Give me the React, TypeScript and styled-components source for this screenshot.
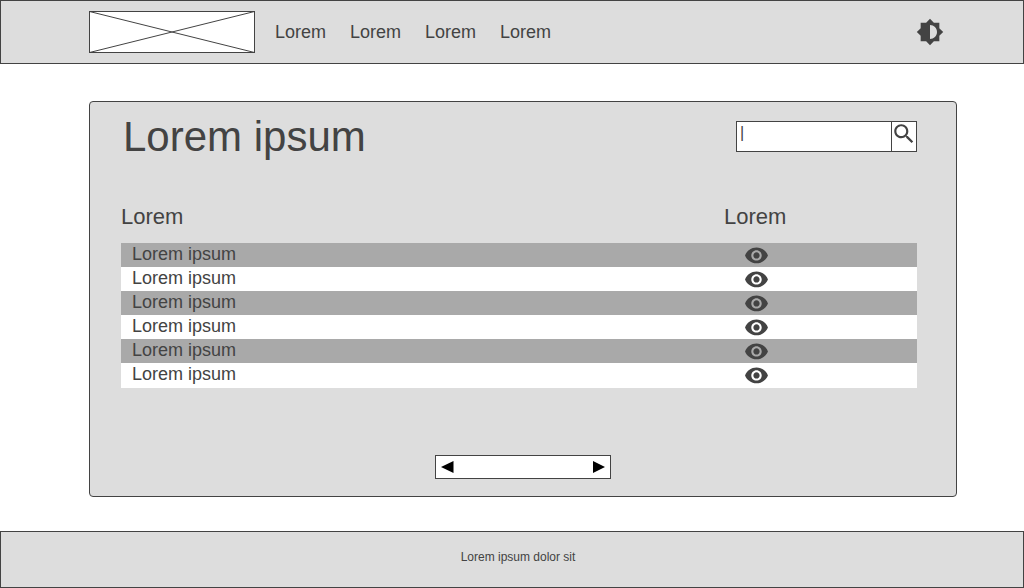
import React from "react";
import styled, { createGlobalStyle } from "styled-components";

const INK = "#434343";
const SURFACE = "#dddddd";
const STRIPE = "#a9a9a9";

const GlobalStyle = createGlobalStyle`
  *, *::before, *::after { box-sizing: border-box; }
  body {
    margin: 0;
    background: #ffffff;
    color: ${INK};
    font-family: "Liberation Sans", Arial, sans-serif;
  }
`;

const Page = styled.div`
  display: flex;
  flex-direction: column;
  min-height: 100vh;
`;

const Header = styled.header`
  display: flex;
  align-items: center;
  min-height: 64px;
  padding: 0 79px 0 88px;
  border: 1px solid ${INK};
  background: ${SURFACE};
`;

const LogoLink = styled.a`
  display: flex;
  color: ${INK};
`;

const Nav = styled.nav`
  display: flex;
  gap: 24px;
  margin-left: 20px;
`;

const NavLink = styled.a`
  color: ${INK};
  font-size: 18px;
  line-height: 24px;
  text-decoration: none;
`;

const IconButton = styled.button`
  display: flex;
  align-items: center;
  justify-content: center;
  padding: 0;
  border: 0;
  background: none;
  color: ${INK};
  cursor: pointer;

  svg { flex-shrink: 0; }
`;

const ThemeButton = styled(IconButton)`
  margin-left: auto;
`;

const Main = styled.main`
  display: flex;
  flex: 1;
  flex-direction: column;
  padding: 37px 67px 34px 89px;
`;

const Card = styled.section`
  display: flex;
  flex: 1;
  flex-direction: column;
  padding: 11px 39px 17px 31px;
  border: 1px solid ${INK};
  border-radius: 4px;
  background: ${SURFACE};
`;

const CardHeader = styled.div`
  display: flex;
  align-items: center;
  justify-content: space-between;
  padding-left: 2px;
`;

const Title = styled.h1`
  margin: 0;
  font-size: 42px;
  font-weight: 400;
  line-height: 47px;
`;

const SearchForm = styled.form`
  display: flex;
  width: 181px;
  height: 31px;
  border: 1px solid ${INK};
  background: #ffffff;
`;

const SearchInput = styled.input`
  flex: 1;
  min-width: 0;
  padding: 0 3px 8px;
  border: 0;
  outline: 0;
  background: none;
  color: ${INK};
  font-family: inherit;
  font-size: 16px;
`;

const SearchButton = styled(IconButton)`
  align-items: flex-start;
  width: 25px;
  border-left: 1px solid ${INK};
`;

const Table = styled.table`
  width: 100%;
  margin-top: 42px;
  border-collapse: collapse;
  table-layout: fixed;
`;

const HeadCell = styled.th<{ $width?: string }>`
  width: ${({ $width }) => $width ?? "auto"};
  height: 41px;
  padding: 0 0 12px;
  font-size: 22px;
  font-weight: 400;
  line-height: 28px;
  text-align: left;
`;

const Row = styled.tr`
  height: 24px;
  background: #ffffff;

  &:nth-child(odd) { background: ${STRIPE}; }
  &:last-child { border-bottom: 1px solid #ffffff; }
`;

const NameCell = styled.td`
  padding: 0 11px 2px;
  font-size: 18px;
  line-height: 22px;
`;

const ActionCell = styled.td`
  padding: 0 20px;
`;

const Pager = styled.nav`
  display: flex;
  align-items: center;
  align-self: center;
  justify-content: space-between;
  width: 176px;
  height: 24px;
  margin-top: auto;
  margin-left: 8px;
  padding: 0 5px;
  border: 1px solid ${INK};
  background: #ffffff;
`;

const PagerButton = styled(IconButton)`
  color: #000000;
`;

const Footer = styled.footer`
  display: flex;
  justify-content: center;
  min-height: 57px;
  padding: 17px 0 0 12px;
  border: 1px solid ${INK};
  background: ${SURFACE};
  font-size: 12px;
  line-height: 16px;
`;

const LogoPlaceholder = () => (
  <svg width="166" height="42" viewBox="0 0 166 42" fill="#fff" stroke="currentColor" aria-hidden="true">
    <rect x="0.5" y="0.5" width="165" height="41" />
    <path d="M0.5 0.5 L165.5 41.5 M165.5 0.5 L0.5 41.5" />
  </svg>
);

const ContrastIcon = () => (
  <svg width="28" height="28" viewBox="0 0 24 24" fill="currentColor" aria-hidden="true">
    <path d="M20 15.31L23.31 12 20 8.69V4h-4.69L12 .69 8.69 4H4v4.69L.69 12 4 15.31V20h4.69L12 23.31 15.31 20H20v-4.69zM12 18V6c3.31 0 6 2.69 6 6s-2.69 6-6 6z" />
  </svg>
);

const SearchIcon = () => (
  <svg width="26" height="26" viewBox="0 1 24 24" fill="currentColor" aria-hidden="true">
    <path d="M15.5 14h-.79l-.28-.27C15.41 12.59 16 11.11 16 9.5 16 5.91 13.09 3 9.5 3S3 5.91 3 9.5 5.91 16 9.5 16c1.61 0 3.09-.59 4.23-1.57l.27.28v.79l5 4.99L20.49 19l-4.99-5zm-6 0C7.01 14 5 11.99 5 9.5S7.01 5 9.5 5 14 7.01 14 9.5 11.99 14 9.5 14z" />
  </svg>
);

const EyeIcon = () => (
  <svg width="25" height="18" viewBox="0 3 24 17.28" fill="currentColor" aria-hidden="true">
    <path d="M12 4.5C7 4.5 2.73 7.61 1 12c1.73 4.39 6 7.5 11 7.5s9.27-3.11 11-7.5c-1.73-4.39-6-7.5-11-7.5zM12 17c-2.76 0-5-2.24-5-5s2.24-5 5-5 5 2.24 5 5-2.24 5-5 5zm0-8c-1.66 0-3 1.34-3 3s1.34 3 3 3 3-1.34 3-3-1.34-3-3-3z" />
  </svg>
);

const Arrow = ({ points }: { points: string }) => (
  <svg width="14" height="14" viewBox="0 0 14 14" fill="currentColor" aria-hidden="true">
    <polygon points={points} />
  </svg>
);

const links = ["Lorem", "Lorem", "Lorem", "Lorem"];
const rows = Array.from({ length: 6 }, () => "Lorem ipsum");

export default function App() {
  return (
    <Page>
      <GlobalStyle />
      <Header>
        <LogoLink href="#" aria-label="Home">
          <LogoPlaceholder />
        </LogoLink>
        <Nav>
          {links.map((label, i) => (
            <NavLink key={i} href="#">{label}</NavLink>
          ))}
        </Nav>
        <ThemeButton type="button" aria-label="Toggle theme">
          <ContrastIcon />
        </ThemeButton>
      </Header>
      <Main>
        <Card>
          <CardHeader>
            <Title>Lorem ipsum</Title>
            <SearchForm role="search" onSubmit={(e) => e.preventDefault()}>
              <SearchInput type="text" aria-label="Search" defaultValue="|" />
              <SearchButton type="submit" aria-label="Search">
                <SearchIcon />
              </SearchButton>
            </SearchForm>
          </CardHeader>
          <Table>
            <thead>
              <tr>
                <HeadCell scope="col">Lorem</HeadCell>
                <HeadCell scope="col" $width="193px">Lorem</HeadCell>
              </tr>
            </thead>
            <tbody>
              {rows.map((name, i) => (
                <Row key={i}>
                  <NameCell>{name}</NameCell>
                  <ActionCell>
                    <IconButton type="button" aria-label="View">
                      <EyeIcon />
                    </IconButton>
                  </ActionCell>
                </Row>
              ))}
            </tbody>
          </Table>
          <Pager aria-label="Pagination">
            <PagerButton type="button" aria-label="Previous page">
              <Arrow points="0,7 12.5,1 12.5,13" />
            </PagerButton>
            <PagerButton type="button" aria-label="Next page">
              <Arrow points="2,1 14,7 2,13" />
            </PagerButton>
          </Pager>
        </Card>
      </Main>
      <Footer>Lorem ipsum dolor sit</Footer>
    </Page>
  );
}
